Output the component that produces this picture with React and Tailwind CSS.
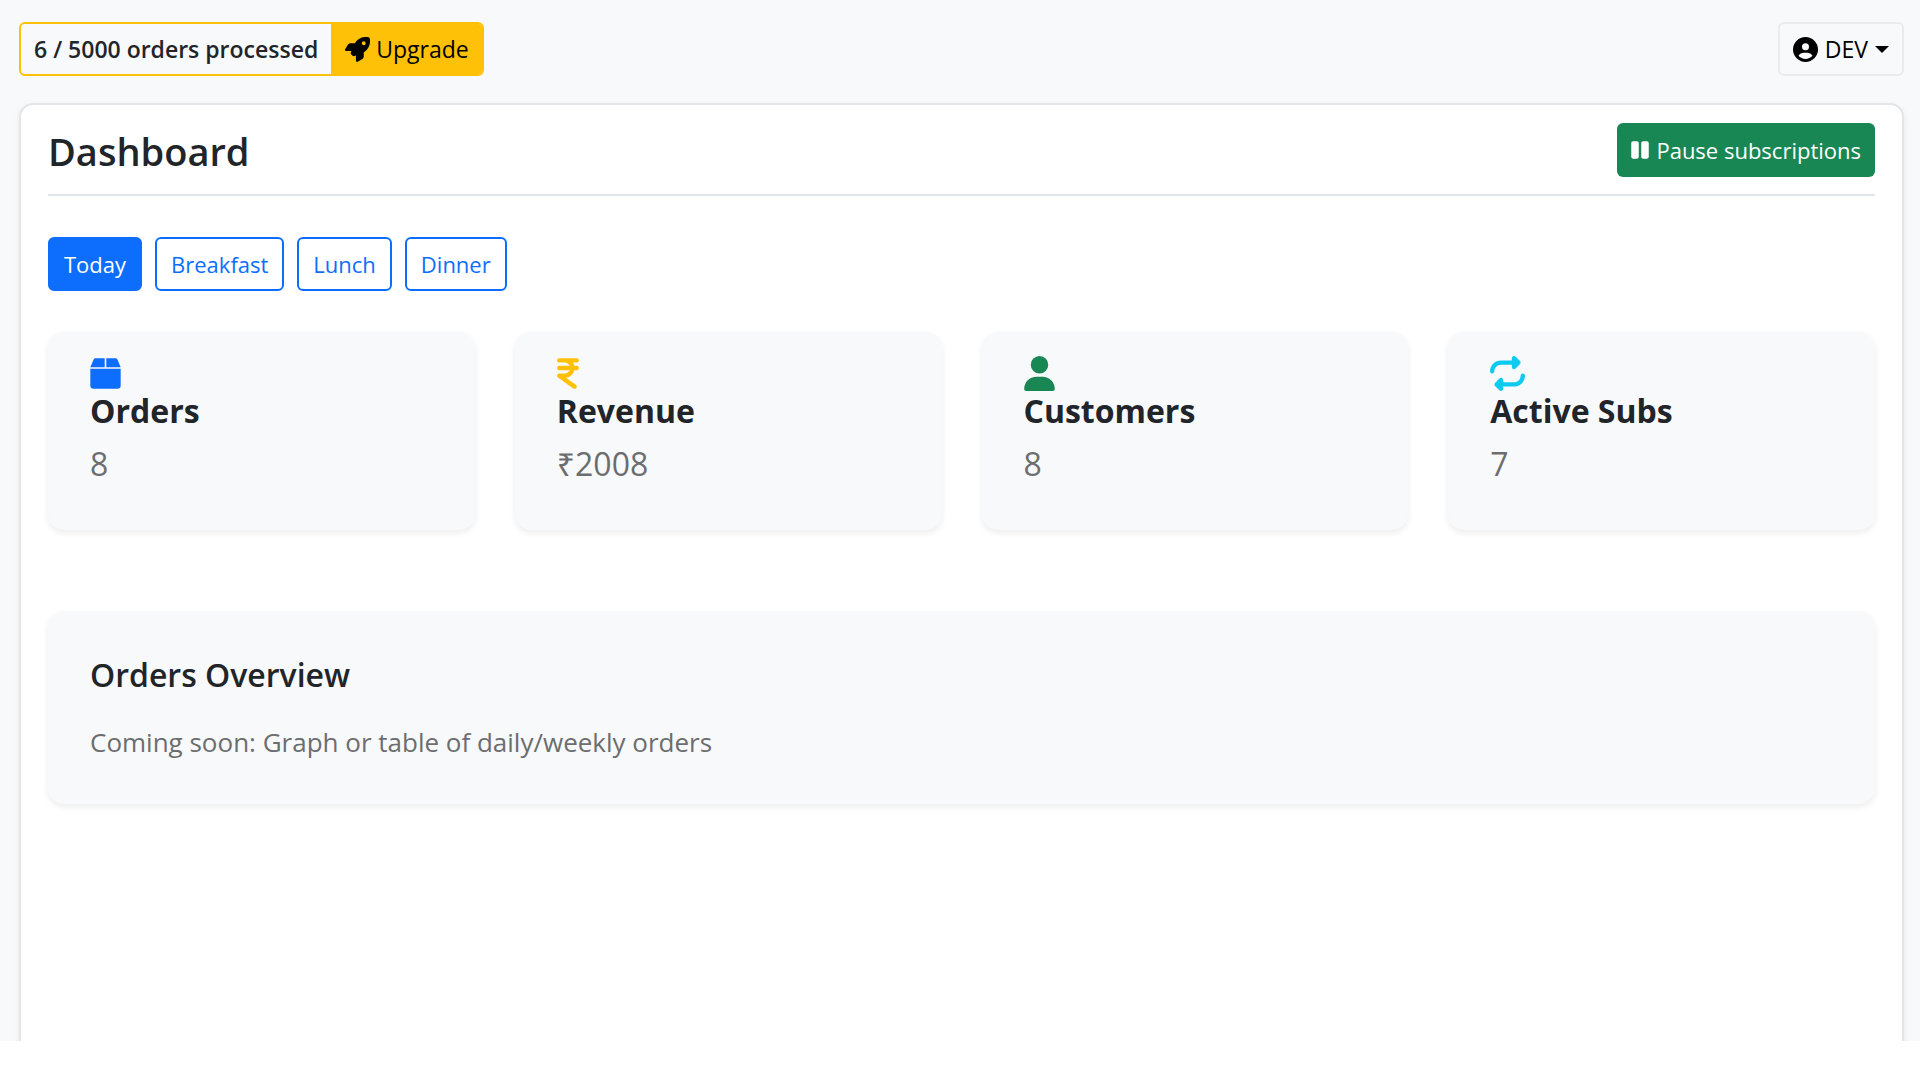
import { FaCircleUser, FaIndianRupeeSign, FaRepeat, FaRocket, FaUser } from "react-icons/fa6";
import { FaPause } from "react-icons/fa";

function BoxIcon(props) {
  return (
    <svg viewBox="0 0 448 512" fill="currentColor" {...props}>
      <path d="M50 52C56 39 68 32 82 32H212V166H2ZM236 32H366C380 32 392 39 398 52L446 166H236ZM2 188H446V436C446 462 428 480 402 480H46C20 480 2 462 2 436Z" />
    </svg>
  );
}

const stats = [
  { label: "Orders", value: "8", Icon: BoxIcon, style: "w-[31px] text-[#0d6efd]" },
  { label: "Revenue", value: "₹2008", Icon: FaIndianRupeeSign, style: "w-[22px] text-[#ffc107]" },
  { label: "Customers", value: "8", Icon: FaUser, style: "w-[31px] text-[#198754]" },
  { label: "Active Subs", value: "7", Icon: FaRepeat, style: "w-[35px] text-[#0dcaf0]" },
];

const filters = ["Today", "Breakfast", "Lunch", "Dinner"];

function StatCard({ label, value, Icon, style }) {
  return (
    <section className="h-[198px] rounded-2xl bg-[#f8f9fa] px-[42px] pt-[24px] shadow-[0_3px_6px_rgba(0,0,0,0.075)]">
      <Icon className={`h-[35px] ${style}`} aria-hidden="true" />
      <h2 className="text-[32px] leading-[40px] font-bold">{label}</h2>
      <p className="mt-[13px] text-[32px] leading-[40px] text-[#6c6d6f]">{value}</p>
    </section>
  );
}

export default function App() {
  return (
    <div className="h-screen bg-white pb-[39px] font-['Open_Sans','Noto_Sans',sans-serif] text-[#212529]">
      <div className="flex h-full flex-col overflow-hidden bg-[#f8f9fa] pt-[22px] pr-[16px] pl-[19px]">
        <header className="flex items-center justify-between text-[23px]">
          <div className="flex h-[54px] overflow-hidden rounded-md border-2 border-[#ffc107]">
            <span className="flex items-center px-[13px] font-semibold">6 / 5000 orders processed</span>
            <button className="flex items-center gap-[6px] bg-[#ffc107] pr-[13px] pl-[14px] text-black">
              <FaRocket className="size-[25px]" aria-hidden="true" />
              Upgrade
            </button>
          </div>
          <button className="flex h-[54px] items-center gap-[7px] rounded-md border-2 border-[#e9ebed] px-[13px] text-black">
            <FaCircleUser className="size-[25px]" aria-hidden="true" />
            DEV
            <span className="border-x-[7px] border-t-[7px] border-x-transparent border-t-black" />
          </button>
        </header>

        <main className="-mb-3 mt-[27px] flex-1 rounded-[14px] border-2 border-[#e3e6e9] bg-white px-[27px] pt-[18px] shadow-[0_3px_6px_rgba(0,0,0,0.075)]">
          <div className="flex items-start justify-between border-b-2 border-[#e3e6ea] pb-[15px]">
            <h1 className="text-[38px] leading-[56px] font-semibold">Dashboard</h1>
            <button className="flex h-[54px] items-center gap-[7px] rounded-md bg-[#198754] px-[14px] text-[22px] text-white">
              <FaPause className="h-[20px] w-[18px]" aria-hidden="true" />
              Pause subscriptions
            </button>
          </div>

          <div className="mt-[41px] flex gap-[13px] text-[22px]">
            {filters.map((name, i) => (
              <button
                key={name}
                className={
                  i === 0
                    ? "h-[54px] rounded-md border-2 border-[#0d6efd] bg-[#0d6efd] px-[14px] text-white"
                    : "h-[54px] rounded-md border-2 border-[#0d6efd] px-[14px] text-[#0d6efd]"
                }
              >
                {name}
              </button>
            ))}
          </div>

          <div className="mt-[41px] grid grid-cols-4 gap-[40px]">
            {stats.map((s) => (
              <StatCard key={s.label} {...s} />
            ))}
          </div>

          <section className="mt-[81px] h-[193px] rounded-2xl bg-[#f8f9fa] px-[42px] pt-[44px] shadow-[0_3px_6px_rgba(0,0,0,0.075)]">
            <h2 className="text-[32px] leading-[40px] font-semibold">Orders Overview</h2>
            <p className="mt-[27px] text-[26px] leading-[40px] text-[#6c6d6f]">
              Coming soon: Graph or table of daily/weekly orders
            </p>
          </section>
        </main>
      </div>
    </div>
  );
}
